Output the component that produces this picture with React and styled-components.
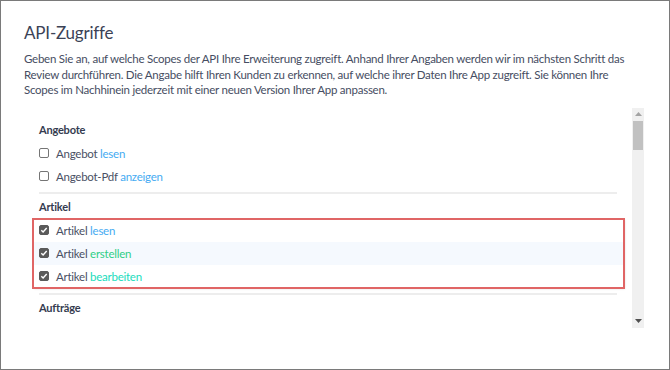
import React from "react";
import styled, { createGlobalStyle } from "styled-components";

const GlobalStyle = createGlobalStyle`
  html, body {
    margin: 0;
    padding: 0;
    background: #ffffff;
  }
  body {
    font-family: Lato, "Open Sans", sans-serif;
  }
`;

const Frame = styled.div`
  box-sizing: border-box;
  width: 670px;
  height: 370px;
  border: 1px solid #7a7a7a;
  padding: 20px 0 0 23px;
  overflow: hidden;
  background: #fff;
`;

const Title = styled.h1`
  margin: 0;
  font-size: 17px;
  letter-spacing: -0.2px;
  line-height: 24px;
  font-weight: 400;
  color: #3b4256;
`;

const Intro = styled.p`
  margin: 6px 0 0;
  font-size: 11.5px;
  letter-spacing: -0.25px;
  line-height: 15.5px;
  color: #464d62;
  white-space: nowrap;
`;

const Panel = styled.div`
  display: flex;
  margin-top: 10px;
  width: 620px;
  height: 220px;
`;

const Scroller = styled.div`
  flex: 1;
  overflow: hidden;
  padding: 0 15px;
`;

const SectionTitle = styled.div`
  height: 20px;
  line-height: 20px;
  margin-top: ${(p) => p.$top || 0}px;
  font-size: 11px;
  letter-spacing: -0.2px;
  font-weight: 700;
  color: #353c50;
`;

const Divider = styled.div`
  height: 2px;
  background: #ededed;
  margin: ${(p) => p.$top || 4}px 0 3px;
`;

const Group = styled.div`
  margin-top: ${(p) => p.$top || 0}px;
`;

const Highlight = styled.div`
  margin: 2px -7px 0 -6px;
  outline: 2px solid #e06565;
  outline-offset: -1px;
  box-shadow: 1px 1px 2px rgba(0, 0, 0, 0.12);
`;

const Row = styled.label`
  display: flex;
  align-items: center;
  gap: 7px;
  height: 23px;
  padding-left: ${(p) => (p.$inset ? 6 : 0)}px;
  background: ${(p) => (p.$shaded ? "#f5f9fe" : "transparent")};
  font-size: 11.5px;
  letter-spacing: -0.25px;
  color: #4a5064;
`;

const Box = styled.span`
  box-sizing: border-box;
  width: 10px;
  height: 10px;
  border-radius: 2px;
  border: 1.5px solid ${(p) => (p.$checked ? "#5a5a5a" : "#757575")};
  background: ${(p) => (p.$checked ? "#5a5a5a" : "#fff")};
  display: inline-flex;
  align-items: center;
  justify-content: center;
  flex-shrink: 0;
`;

const Action = styled.span`
  color: ${(p) => p.$color};
`;

const ScrollTrack = styled.div`
  width: 12px;
  background: #f0f0f0;
  display: flex;
  flex-direction: column;
  align-items: center;
`;

const Arrow = styled.div`
  height: 13px;
  display: flex;
  align-items: center;
  justify-content: center;
`;

const Thumb = styled.div`
  width: 10px;
  height: 29px;
  background: #c1c1c1;
`;

const Spacer = styled.div`
  flex: 1;
`;

const colors = {
  lesen: "#45abf2",
  anzeigen: "#45abf2",
  erstellen: "#2fcf86",
  bearbeiten: "#20dcbc",
};

function Check({ checked }) {
  return (
    <Box $checked={checked}>
      {checked && (
        <svg width="8" height="8" viewBox="0 0 8 8">
          <path d="M1.3 4.2 L3.1 6 L6.7 2" fill="none" stroke="#fff" strokeWidth="1.4" />
        </svg>
      )}
    </Box>
  );
}

function Scope({ name, action, checked, shaded, inset }) {
  return (
    <Row $shaded={shaded} $inset={inset}>
      <Check checked={checked} />
      <span>
        {name} <Action $color={colors[action]}>{action}</Action>
      </span>
    </Row>
  );
}

export default function App() {
  return (
    <>
      <GlobalStyle />
      <Frame>
        <Title>API-Zugriffe</Title>
        <Intro>
          Geben Sie an, auf welche Scopes der API Ihre Erweiterung zugreift. Anhand Ihrer Angaben werden wir im nächsten Schritt das
          <br />
          Review durchführen. Die Angabe hilft Ihren Kunden zu erkennen, auf welche ihrer Daten Ihre App zugreift. Sie können Ihre
          <br />
          Scopes im Nachhinein jederzeit mit einer neuen Version Ihrer App anpassen.
        </Intro>
        <Panel>
          <Scroller>
            <SectionTitle $top={12}>Angebote</SectionTitle>
            <Group $top={2}>
              <Scope name="Angebot" action="lesen" />
              <Scope name="Angebot-Pdf" action="anzeigen" />
            </Group>
            <Divider />
            <SectionTitle>Artikel</SectionTitle>
            <Highlight>
              <Scope name="Artikel" action="lesen" checked inset />
              <Scope name="Artikel" action="erstellen" checked shaded inset />
              <Scope name="Artikel" action="bearbeiten" checked inset />
            </Highlight>
            <Divider $top={5} />
            <SectionTitle>Aufträge</SectionTitle>
          </Scroller>
          <ScrollTrack>
            <Arrow>
              <svg width="7" height="4" viewBox="0 0 7 4">
                <path d="M0 4 L3.5 0 L7 4 Z" fill="#a3a3a3" />
              </svg>
            </Arrow>
            <Thumb />
            <Spacer />
            <Arrow>
              <svg width="7" height="4" viewBox="0 0 7 4">
                <path d="M0 0 L7 0 L3.5 4 Z" fill="#505050" />
              </svg>
            </Arrow>
          </ScrollTrack>
        </Panel>
      </Frame>
    </>
  );
}
